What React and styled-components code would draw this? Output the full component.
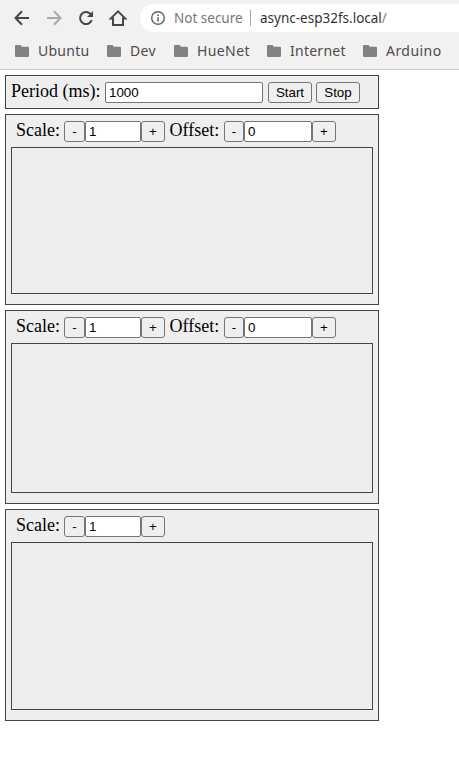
import React from "react";
import styled, { createGlobalStyle } from "styled-components";

const GlobalStyle = createGlobalStyle`
  * { box-sizing: border-box; }
  body { margin: 0; background: #fff; overflow: hidden; }
`;

const Browser = styled.div`
  width: 459px;
  height: 782px;
  overflow: hidden;
`;

const Chrome = styled.header`
  height: 70px;
  background: #f2f1f0;
  border-bottom: 1px solid #cbcac9;
  font-family: "Noto Sans", sans-serif;
  overflow: hidden;
`;

const NavBar = styled.div`
  display: flex;
  align-items: center;
  height: 28px;
  margin-top: 4px;
  padding-left: 12px;
`;

const NavIcon = styled.svg`
  flex: none;
  width: 20px;
  height: 20px;
  margin-right: 12px;
  fill: none;
  stroke: ${(p) => (p.$muted ? "#aaa9a8" : "#474645")};
  stroke-width: 2;
`;

const AddressBar = styled.div`
  display: flex;
  align-items: center;
  flex: none;
  width: 340px;
  height: 28px;
  padding-left: 10px;
  border-radius: 14px 0 0 14px;
  background: #fff;
`;

const InfoIcon = styled.svg`
  flex: none;
  width: 16px;
  height: 16px;
  margin-right: 8px;
`;

const BarText = styled.span`
  flex: none;
  width: ${(p) => p.$width}px;
  font-size: ${(p) => p.$size || 13.5}px;
  line-height: 20px;
  letter-spacing: ${(p) => p.$spacing || 0}px;
  color: ${(p) => p.$color};
  white-space: pre;
`;

const Divider = styled.div`
  flex: none;
  width: 1px;
  height: 16px;
  margin: 0 9px 0 7px;
  background: #a5a5a5;
`;

const Slash = styled.span`
  color: #7b7b7b;
`;

const BookmarkBar = styled.nav`
  display: flex;
  align-items: center;
  gap: 18px;
  height: 37px;
  padding-left: 15px;
`;

const Bookmark = styled.div`
  display: flex;
  align-items: center;
  gap: 9px;
  flex: none;
`;

const FolderIcon = styled.svg`
  flex: none;
  width: 14px;
  height: 12px;
  margin-top: 1px;
  fill: #818181;
`;

const Page = styled.main`
  display: flex;
  flex-direction: column;
  gap: 5px;
  width: 374px;
  margin: 5px 0 0 5px;
  font: 18px/21px "Liberation Serif", serif;
  color: #000;
`;

const Panel = styled.section`
  height: ${(p) => p.$height}px;
  padding: 6px 5px 0;
  border: 1px solid #444;
  background: #eee;
`;

const Controls = styled.div`
  display: flex;
  height: 21px;
  padding-left: ${(p) => p.$indent || 0}px;
`;

const Label = styled.label`
  flex: none;
  width: ${(p) => p.$width}px;
  height: 21px;
  line-height: 19px;
  white-space: pre;
`;

const Field = styled.input`
  flex: none;
  width: ${(p) => p.$width}px;
  height: 21px;
  margin: 0;
  padding: 1px 3px;
  border: 1px solid #767676;
  border-radius: 2px;
  outline: 0;
  background: #fff;
  color: #000;
  font: 13.333px "Liberation Sans", sans-serif;
`;

const Button = styled.button`
  flex: none;
  width: ${(p) => p.$width}px;
  height: 21px;
  margin: 0 0 0 ${(p) => p.$gap || 0}px;
  padding: 0;
  border: 1px solid #767676;
  border-radius: 3px;
  background: #efefef;
  color: #000;
  font: 13.333px "Liberation Sans", sans-serif;
`;

const Stepper = styled.div`
  display: flex;
  margin-right: 4.5px;

  & + label {
    width: 54.5px;
  }
`;

const Plot = styled.div`
  height: ${(p) => p.$height}px;
  margin-top: 5px;
  border: 1px solid #444;
`;

const bookmarks = [
  { name: "Ubuntu", width: 51, spacing: 0.25 },
  { name: "Dev", width: 26, spacing: 0.3 },
  { name: "HueNet", width: 52, spacing: 0.4 },
  { name: "Internet", width: 55, spacing: 0.25 },
  { name: "Arduino", width: 56, spacing: 0.45 },
];

const charts = [
  { height: 191, plot: 147, offset: true },
  { height: 194, plot: 150, offset: true },
  { height: 212, plot: 168, offset: false },
];

function NumberStepper({ value, minus, field }) {
  return (
    <Stepper>
      <Button $width={minus}>-</Button>
      <Field $width={field} defaultValue={value} />
      <Button $width={24}>+</Button>
    </Stepper>
  );
}

export default function App() {
  return (
    <Browser>
      <GlobalStyle />
      <Chrome>
        <NavBar>
          <NavIcon viewBox="0 0 20 20">
            <path d="M17 10H4.5M10 3.3L3.5 10l6.5 6.7" />
          </NavIcon>
          <NavIcon viewBox="0 0 20 20" $muted>
            <path d="M3 10h12.5M10 3.3l6.5 6.7-6.5 6.7" />
          </NavIcon>
          <NavIcon viewBox="0 0 20 20">
            <path d="M15.7 12.2A6 6 0 1 1 14.4 5.9L16 7.5" />
            <path d="M17 3v6h-6z" fill="#474645" stroke="none" />
          </NavIcon>
          <NavIcon viewBox="0 0 20 20">
            <path d="M2.9 10.4H5V17h10v-6.6h2.1L10 3.4z" />
          </NavIcon>
          <AddressBar>
            <InfoIcon viewBox="0 0 16 16">
              <circle cx="8" cy="8" r="6.3" fill="none" stroke="#5f6368" strokeWidth="1.4" />
              <path d="M7.2 7.2h1.6v4.3H7.2zM7.2 4.5h1.6v1.6H7.2z" fill="#5f6368" />
            </InfoIcon>
            <BarText $width={69} $color="#767676">Not secure</BarText>
            <Divider />
            <BarText $width={140} $color="#333">
              async-esp32fs.local<Slash>/</Slash>
            </BarText>
          </AddressBar>
        </NavBar>
        <BookmarkBar>
          {bookmarks.map((b) => (
            <Bookmark key={b.name}>
              <FolderIcon viewBox="0 0 14 12">
                <path d="M1.3 0h4.2L7 1.7h5.7Q14 1.7 14 3v7.7Q14 12 12.7 12H1.3Q0 12 0 10.7V1.3Q0 0 1.3 0z" />
              </FolderIcon>
              <BarText $width={b.width} $size={14} $spacing={b.spacing} $color="#4c4c4c">
                {b.name}
              </BarText>
            </Bookmark>
          ))}
        </BookmarkBar>
      </Chrome>
      <Page>
        <Panel $height={34}>
          <Controls>
            <Label $width={94}>Period (ms):</Label>
            <Field $width={158} defaultValue="1000" />
            <Button $width={44} $gap={5}>Start</Button>
            <Button $width={44} $gap={4}>Stop</Button>
          </Controls>
        </Panel>
        {charts.map((c) => (
          <Panel key={c.height} $height={c.height}>
            <Controls $indent={5}>
              <Label $width={48}>Scale:</Label>
              <NumberStepper value="1" minus={21} field={56} />
              {c.offset && (
                <>
                  <Label $width={54.5}>Offset:</Label>
                  <NumberStepper value="0" minus={20} field={68} />
                </>
              )}
            </Controls>
            <Plot $height={c.plot} />
          </Panel>
        ))}
      </Page>
    </Browser>
  );
}
